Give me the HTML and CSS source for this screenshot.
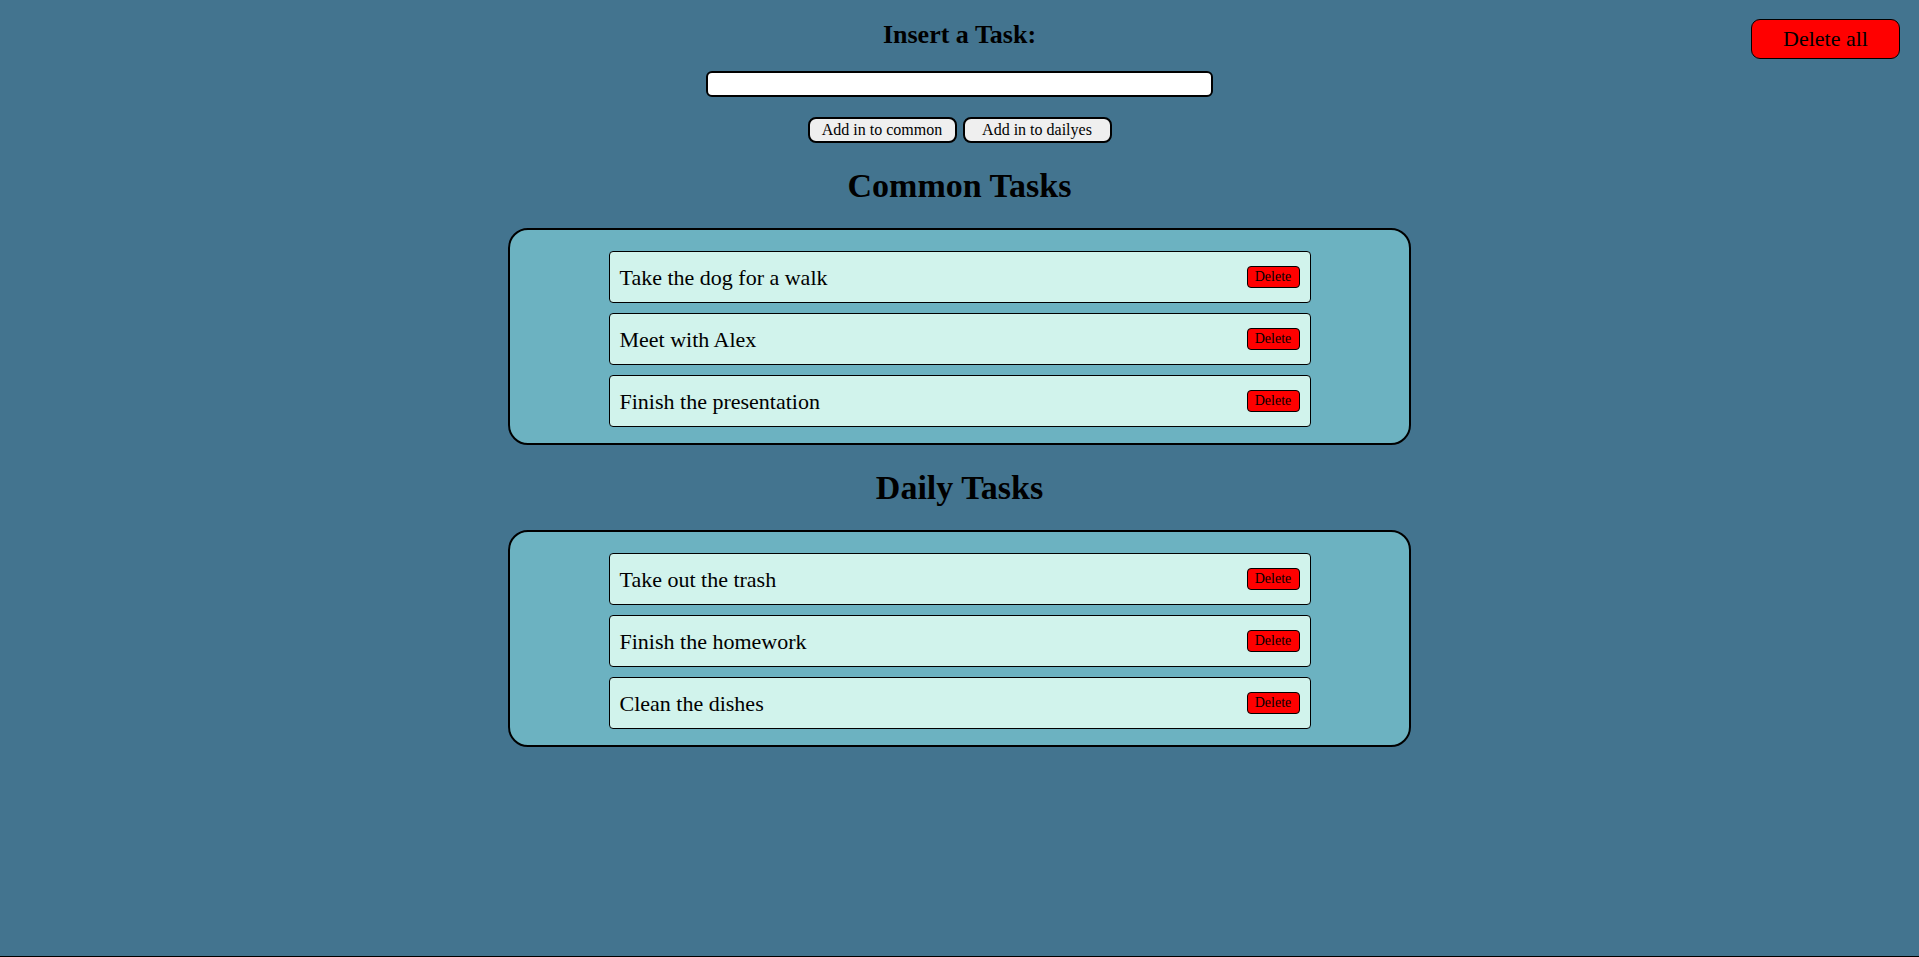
FILE: index.html
```html
<!DOCTYPE html>
<html lang="en">
<head>
<meta charset="utf-8">
<title>Tasks</title>
<link rel="stylesheet" href="styles.css">
</head>
<body>
<div class="page">
  <header class="top">
    <div class="form">
      <h3 class="form-title">Insert a Task:</h3>
      <input class="task-input" type="text">
      <div class="add-buttons">
        <button class="add-btn">Add in to common</button>
        <button class="add-btn">Add in to dailyes</button>
      </div>
    </div>
    <button class="delete-all">Delete all</button>
  </header>

  <section class="group">
    <h2 class="group-title">Common Tasks</h2>
    <div class="list">
      <div class="task"><span class="task-text">Take the dog for a walk</span><button class="delete">Delete</button></div>
      <div class="task"><span class="task-text">Meet with Alex</span><button class="delete">Delete</button></div>
      <div class="task"><span class="task-text">Finish the presentation</span><button class="delete">Delete</button></div>
    </div>
  </section>

  <section class="group">
    <h2 class="group-title">Daily Tasks</h2>
    <div class="list">
      <div class="task"><span class="task-text">Take out the trash</span><button class="delete">Delete</button></div>
      <div class="task"><span class="task-text">Finish the homework</span><button class="delete">Delete</button></div>
      <div class="task"><span class="task-text">Clean the dishes</span><button class="delete">Delete</button></div>
    </div>
  </section>
</div>
</body>
</html>
```

FILE: styles.css
```css
* {
  box-sizing: border-box;
}

html, body {
  margin: 0;
  padding: 0;
}

body {
  background: #43748f;
  font-family: "Liberation Serif", "Times New Roman", serif;
  color: #000;
}

.page {
  min-height: 100vh;
  border-bottom: 1px solid #000;
  display: flex;
  flex-direction: column;
  align-items: center;
}

.top {
  width: 100%;
  display: grid;
  grid-template-columns: 1fr auto 1fr;
}

.form {
  grid-column: 2;
  display: flex;
  flex-direction: column;
  align-items: center;
}

.form-title {
  margin: 20px 0 0;
  font-size: 26px;
  line-height: 30px;
  font-weight: bold;
}

.task-input {
  margin-top: 21px;
  width: 507px;
  height: 26px;
  border: 2px solid #000;
  border-radius: 6px;
  background: #fff;
  padding: 0 4px;
  font-family: inherit;
  font-size: 16px;
}

.add-buttons {
  margin-top: 20px;
  display: flex;
  gap: 6px;
}

.add-btn {
  width: 149px;
  height: 26px;
  padding: 0;
  border: 2px solid #000;
  border-radius: 8px;
  background: #efefef;
  font-family: inherit;
  font-size: 16px;
  color: #000;
}

.delete-all {
  grid-column: 3;
  justify-self: end;
  align-self: start;
  margin: 19px 19px 0 0;
  width: 149px;
  height: 40px;
  padding: 0;
  border: 1px solid #000;
  border-radius: 9px;
  background: #ff0000;
  font-family: inherit;
  font-size: 22px;
  color: #000;
}

.group {
  display: flex;
  flex-direction: column;
  align-items: center;
}

.group-title {
  margin: 23px 0 0;
  font-size: 34px;
  line-height: 40px;
  font-weight: bold;
}

.list {
  margin-top: 22px;
  width: 903px;
  border: 2px solid #000;
  border-radius: 20px;
  background: #6cb2c1;
  padding: 21px 0 16px;
  display: flex;
  flex-direction: column;
  align-items: center;
  gap: 10px;
}

.task {
  width: 702px;
  height: 52px;
  border: 1px solid #000;
  border-radius: 4px;
  background: #d1f3ec;
  padding: 2px 10px 0 10px;
  display: flex;
  align-items: center;
  justify-content: space-between;
}

.task-text {
  font-size: 22px;
}

.delete {
  width: 53px;
  height: 22px;
  margin-top: -2px;
  padding: 0;
  border: 1px solid #000;
  border-radius: 4px;
  background: #ff0000;
  font-family: inherit;
  font-size: 14px;
  color: #000;
}
```
